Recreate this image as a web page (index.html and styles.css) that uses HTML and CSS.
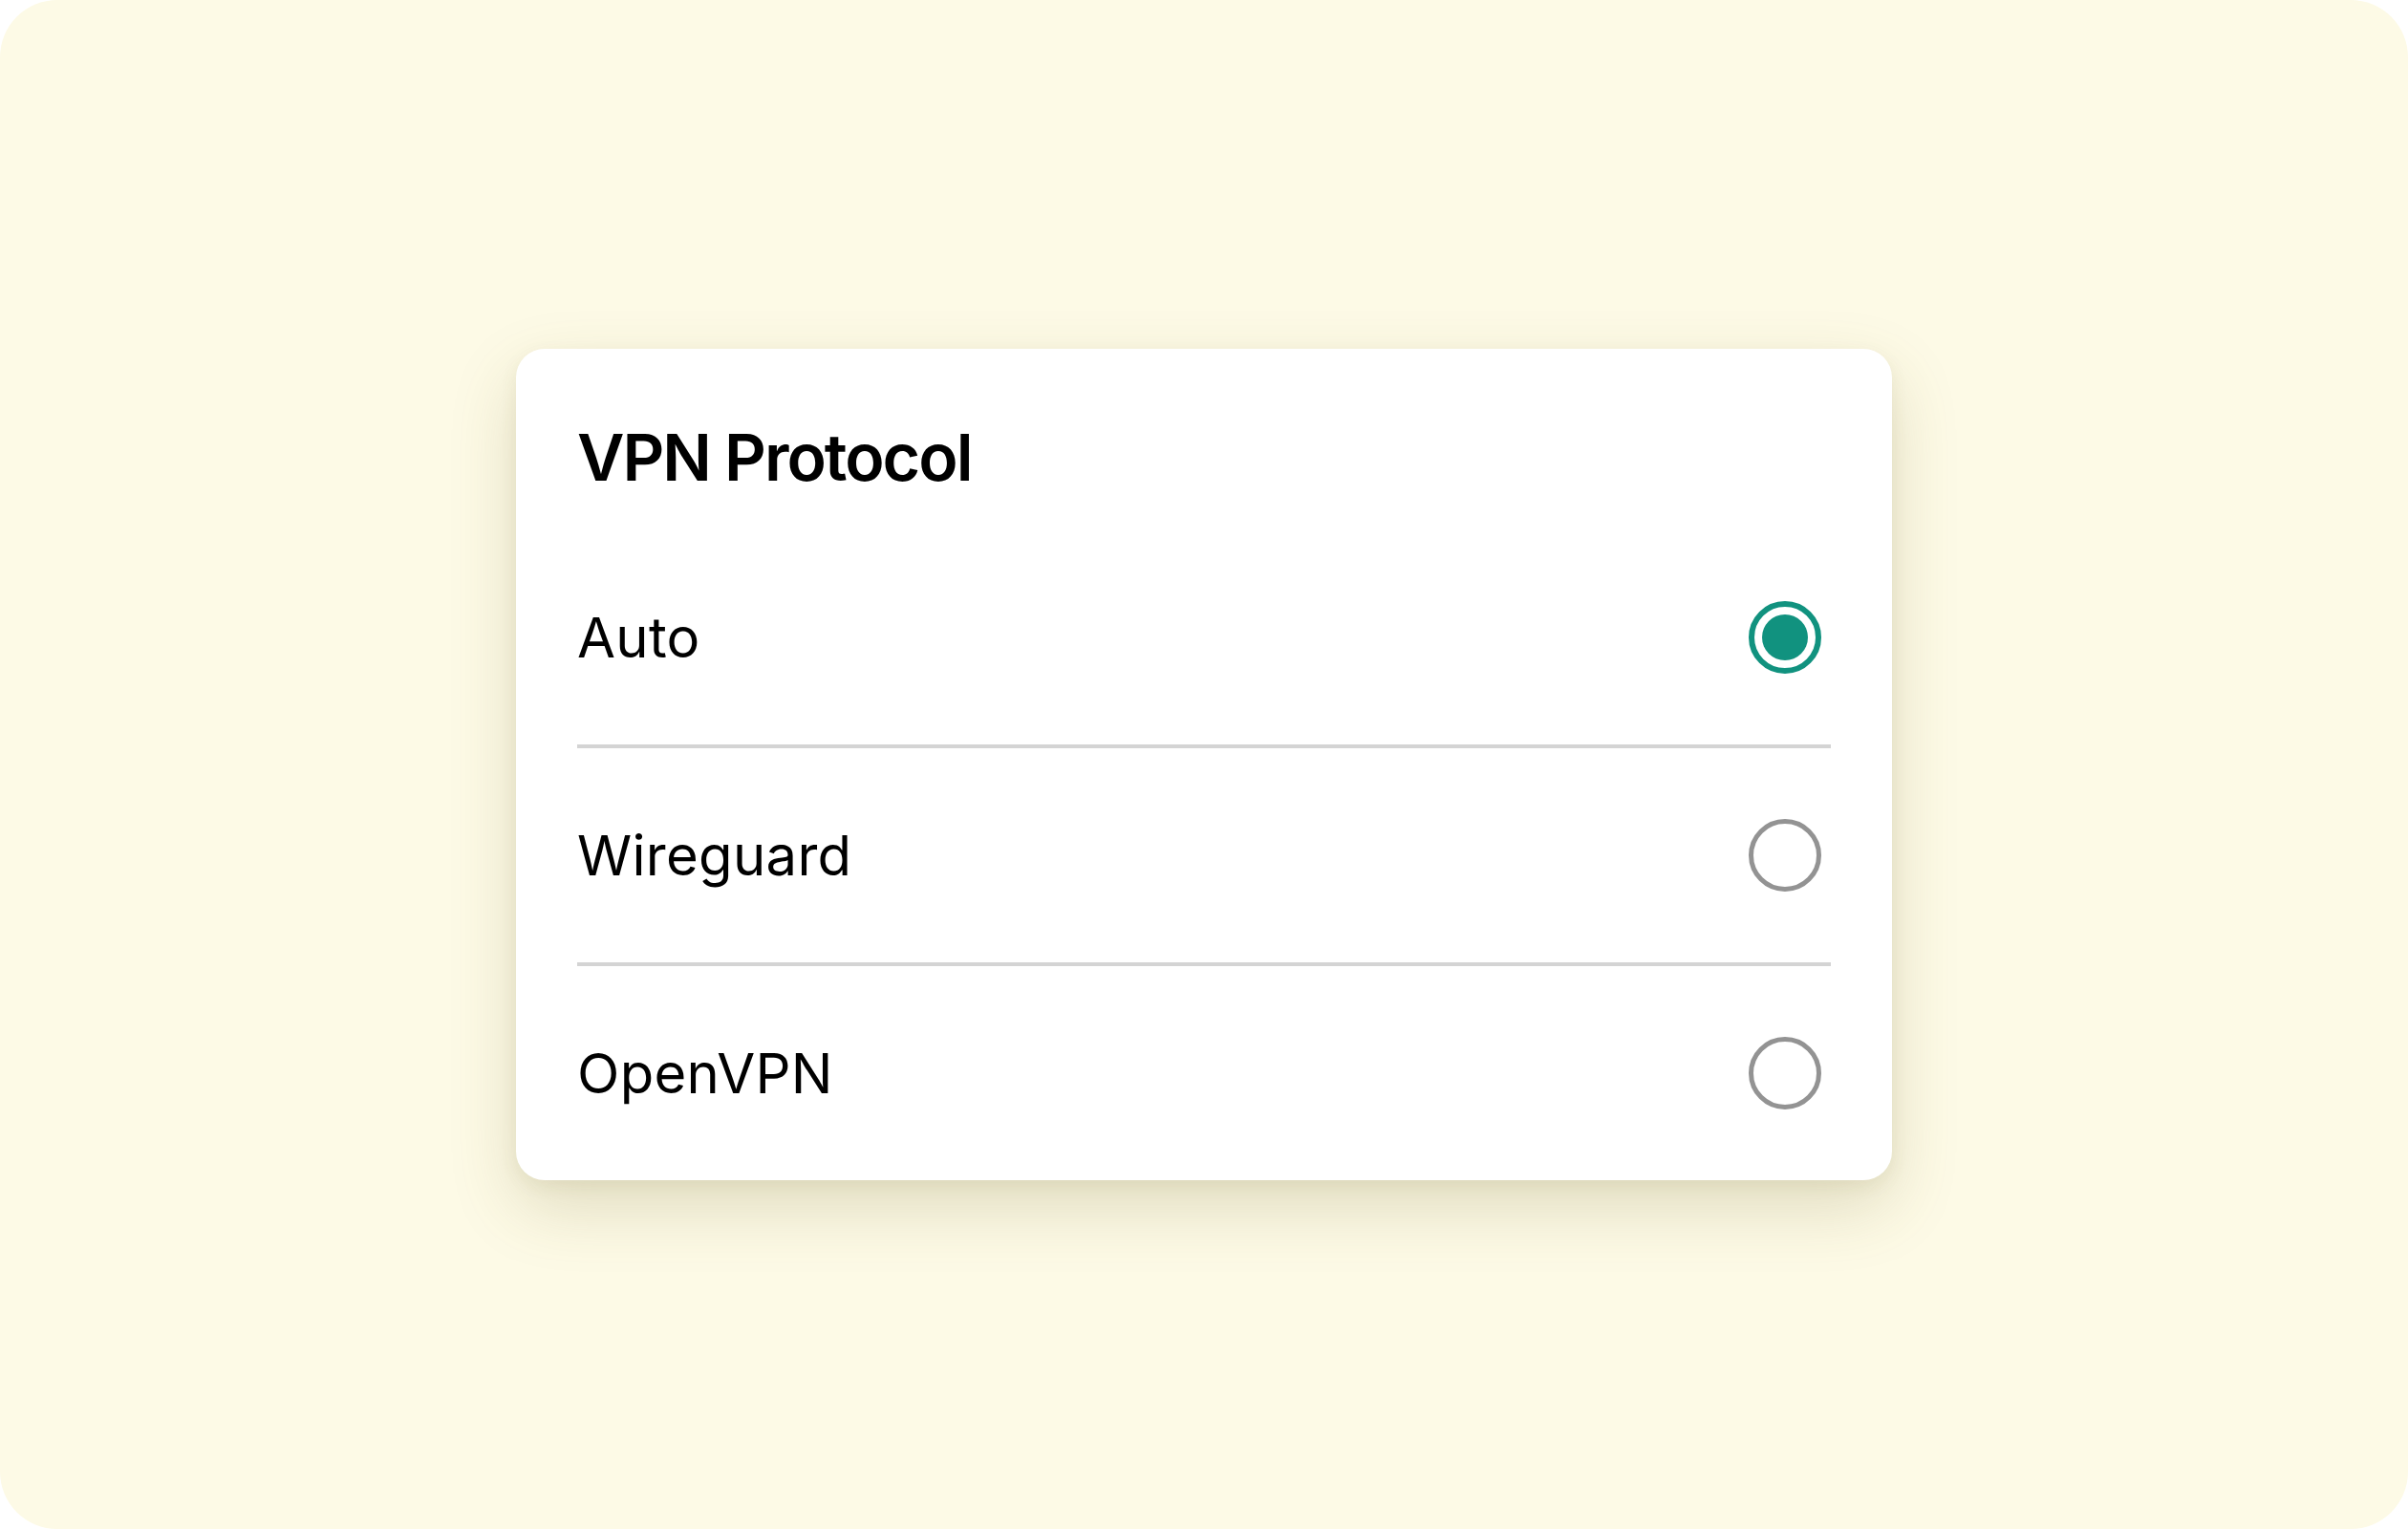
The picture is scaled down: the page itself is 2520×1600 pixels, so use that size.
FILE: index.html
```html
<!DOCTYPE html>
<html lang="en">
<head>
<meta charset="utf-8">
<title>VPN Protocol</title>
<link rel="stylesheet" href="styles.css">
</head>
<body>
<div class="frame">
  <section class="card">
    <h1 class="title">VPN Protocol</h1>
    <div class="options">
      <label class="option">
        <span class="option-label">Auto</span>
        <span class="radio radio-on"><span class="dot"></span></span>
      </label>
      <label class="option">
        <span class="option-label">Wireguard</span>
        <span class="radio"></span>
      </label>
      <label class="option">
        <span class="option-label">OpenVPN</span>
        <span class="radio"></span>
      </label>
    </div>
  </section>
</div>
</body>
</html>
```

FILE: styles.css
```css
html, body {
  margin: 0;
  padding: 0;
  background: #ffffff;
}

body {
  width: 2520px;
  height: 1600px;
  font-family: Inter, "Noto Sans", "Liberation Sans", sans-serif;
  color: #000;
}

.frame {
  width: 2520px;
  height: 1600px;
  border-radius: 60px;
  background: #fdfae6;
  display: flex;
  align-items: center;
  justify-content: center;
}

.card {
  width: 1440px;
  box-sizing: border-box;
  padding: 64px 64px 0 64px;
  background: #ffffff;
  border-radius: 30px;
  box-shadow: 0 28px 70px rgba(110, 100, 40, 0.20), 0 6px 18px rgba(110, 100, 40, 0.08);
}

.title {
  margin: 0 0 28px 0;
  font-size: 68px;
  line-height: 98px;
  font-weight: 600;
  letter-spacing: -2px;
}

.options {
  display: flex;
  flex-direction: column;
}

.option {
  display: flex;
  align-items: center;
  justify-content: space-between;
  padding: 64px 0;
  border-bottom: 4px solid #d4d4d4;
}

.option:last-child {
  border-bottom: none;
}

.option-label {
  font-size: 58px;
  font-weight: 400;
  line-height: 96px;
  letter-spacing: 0.3px;
}

.radio {
  width: 76px;
  height: 76px;
  margin: 10px;
  box-sizing: border-box;
  border-radius: 50%;
  border: 5px solid #939393;
  display: flex;
  align-items: center;
  justify-content: center;
}

.radio-on {
  border: 6px solid #11927f;
}

.dot {
  width: 48px;
  height: 48px;
  border-radius: 50%;
  background: #11927f;
}
```
